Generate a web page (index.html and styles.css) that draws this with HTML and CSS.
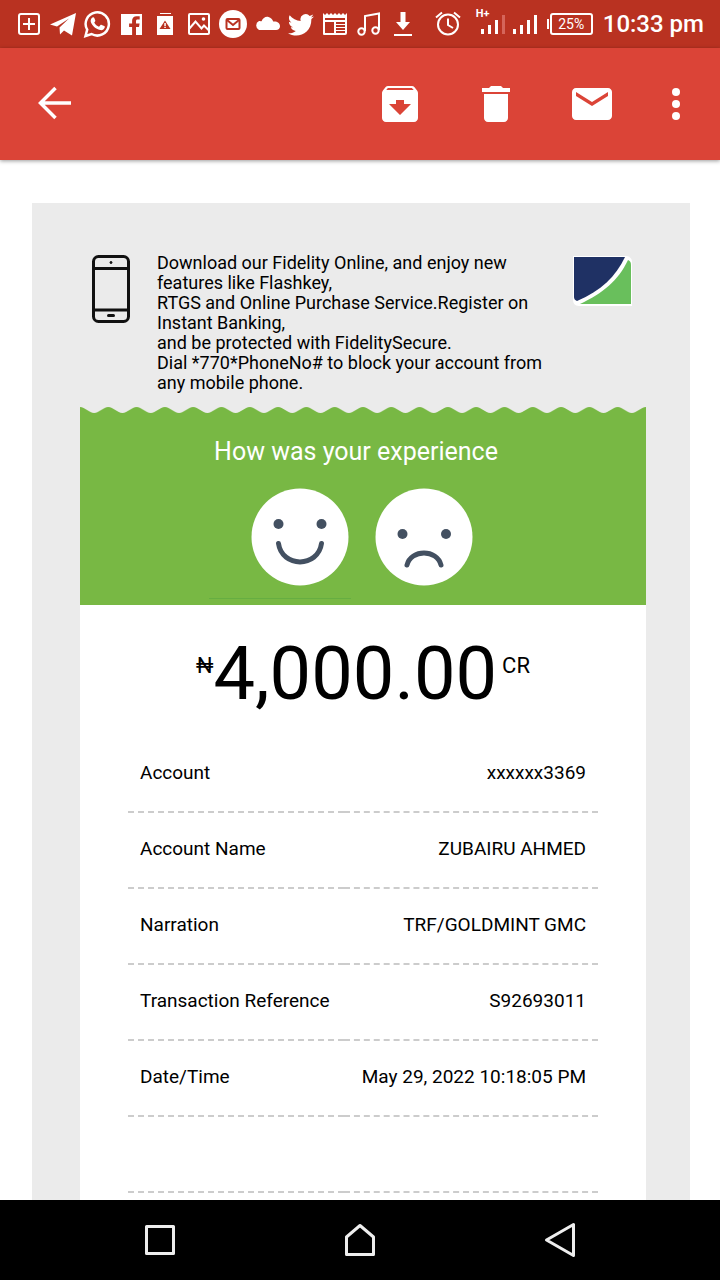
FILE: index.html
```
<!DOCTYPE html>
<html lang="en">
<head>
<meta charset="utf-8">
<meta name="viewport" content="width=device-width, initial-scale=1">
<title>Transaction alert</title>
<link rel="stylesheet" href="styles.css">
</head>
<body>
<div class="screen">
  <div class="status">
    <div class="notifications">
      <svg viewBox="0 0 28 28"><rect x="4" y="4" width="20" height="20" rx="2" class="line"/><path class="line" d="M14 8v12M8 14h12"/></svg>
      <svg viewBox="0 0 28 28"><path d="M1 14.500 27 3l-4 22.500-8-5-4 4-.5-7L20 8.500 8 16.500z"/></svg>
      <svg viewBox="0 0 28 28"><path class="line thick" d="M2.500 26l1.700-6.300A11.600 11.600 0 1 1 8.500 24z"/><path d="M9.500 7.500c.8-.4 1.500-.2 1.800.5l1 2.400c.2.500-.2 1.100-1.100 2 1.200 2.200 2.800 3.500 4.800 4.300l1.500-1.600c.3-.4.7-.4 1.200-.2l2.500 1.200c.7.300.7.800.5 1.500-.6 2-2.500 3-4.600 2.500C12.500 19 9 15.500 7.800 12c-.5-1.700.3-3.600 1.700-4.500z"/></svg>
      <svg viewBox="0 0 28 28"><path d="M4 4h21v21h-6v-8h3l.6-3.500H19v-2.300c0-1 .4-1.700 1.700-1.700h2V6.200h-3c-3 0-4.600 1.800-4.600 4.600v2.700h-3V17h3v8H4z"/></svg>
      <svg viewBox="0 0 28 28"><path d="M9 3h11v1H9zM6 6h16v19H6z"/><path class="cut" d="M14 10.500l5.500 8.500h-11z"/><path d="M13.300 13h1.500v3h-1.500zM13.300 16.800h1.500V18h-1.500z"/></svg>
      <svg viewBox="0 0 28 28"><rect x="4" y="4" width="20" height="20" rx="1" class="line"/><path class="line" d="M4 19l6.500-7.500 6 7 2.500-3 5 5"/><circle cx="18.500" cy="9" r="1.800"/></svg>
      <svg viewBox="0 0 28 28"><circle cx="14" cy="14" r="14"/><rect class="cutline" x="7.500" y="9" width="13" height="10" rx="1"/><path class="cutline" d="M8 10l6 5 6-5"/></svg>
      <svg viewBox="0 0 28 28"><path d="M6 20a5 5 0 0 1 0-9c1-.3 2 0 2.500.3C10 8 12.500 6.200 15.500 7c2.500.6 4 2.300 4.700 4.500C24 11 27 13 27 16.200 27 18.500 25.500 20 23 20z"/></svg>
      <svg viewBox="0 0 28 28"><path d="M27 6.500c-1 .5-2 .7-3 .9 1-.8 1.700-1.600 2.200-2.800-1.200.7-2.300 1.100-3.500 1.300A5.300 5.300 0 0 0 13.700 11C9.300 10.800 5.300 8.700 2.700 5.300c-1.400 2.500-.8 5.500 1.700 7.200-1 0-1.700-.3-2.500-.7.100 2.800 1.700 4.700 4.300 5.400-.8.200-1.600.2-2.400.1.800 2.200 2.600 3.500 5 3.700C6.500 22.800 4 23.500 1 23.200 9.500 28.500 24.400 25 24.400 9c1-.7 1.900-1.600 2.600-2.500z"/></svg>
      <svg viewBox="0 0 28 28"><path fill-rule="evenodd" d="M2 3l2 2 2-2 2 2 2-2 2 2 2-2 2 2 2-2 2 2 2-2 2 2 2-2v20a2 2 0 0 1-2 2H3a1 1 0 0 1-1-1zM4 8v2h20V8zm0 4v11h9V12zm11 0v2h9v-2zm0 3v2h9v-2zm0 3v2h9v-2zm0 3v2h9v-2z"/></svg>
      <svg viewBox="0 0 28 28"><path class="line" d="M10 21V6l14-2.500V20"/><circle class="line" cx="6.500" cy="21.500" r="3.200"/><circle class="line" cx="20.500" cy="20.500" r="3.200"/></svg>
      <svg viewBox="0 0 28 28"><path d="M11.500 2h5v10H21l-7 8-7-8h4.500zM5 24h18v2H5z"/></svg>
    </div>
    <div class="system">
      <svg class="alarm" viewBox="0 0 28 28"><circle class="line" cx="14" cy="14.500" r="10"/><path class="line" d="M14 8.500V15l5 3M2 7.500l6-5M26 7.500l-6-5"/></svg>
      <span class="signals">
        <span class="cell"><span class="network">H+</span><svg class="bars" viewBox="0 0 26 20"><path d="M1 15h3v5H1zM8 11h3v9H8zM15 6h3v14h-3z"/><path class="dim" d="M22 1h3v19h-3z"/></svg></span>
        <svg class="bars" viewBox="0 0 26 20"><path d="M1 15h3v5H1zM8 11h3v9H8zM15 6h3v14h-3zM22 1h3v19h-3z"/></svg>
      </span>
      <span class="battery">25%</span>
      <span class="clock">10:33 pm</span>
    </div>
  </div>

  <header class="appbar">
    <button class="action back" aria-label="Back"><svg viewBox="0 0 48 48"><path class="arrow" d="M24.500 8 9.500 23l15 15M9.500 23H40"/></svg></button>
    <button class="action" aria-label="Archive"><svg viewBox="0 0 24 24"><path d="M20.540 5.230l-1.390-1.680C18.880 3.210 18.470 3 18 3H6c-.47 0-.88.21-1.160.550L3.460 5.230C3.170 5.570 3 6.020 3 6.500V19c0 1.100.9 2 2 2h14c1.100 0 2-.9 2-2V6.500c0-.48-.17-.93-.46-1.270zM12 17.500L6.500 12H10v-2h4v2h3.500L12 17.500zM5.120 5l.81-1h12l.94 1H5.120z"/></svg></button>
    <button class="action" aria-label="Delete"><svg viewBox="0 0 24 24"><path d="M6 19c0 1.100.9 2 2 2h8c1.100 0 2-.9 2-2V7H6v12zM19 4h-3.500l-1-1h-5l-1 1H5v2h14V4z"/></svg></button>
    <button class="action" aria-label="Mark as unread"><svg viewBox="0 0 24 24"><path d="M20 4H4c-1.100 0-1.990.9-1.990 2L2 18c0 1.100.9 2 2 2h16c1.100 0 2-.9 2-2V6c0-1.100-.9-2-2-2zm0 4l-8 5-8-5V6l8 5 8-5v2z"/></svg></button>
    <button class="action more" aria-label="More options"><svg viewBox="0 0 24 24"><circle cx="12" cy="6" r="2"/><circle cx="12" cy="12" r="2"/><circle cx="12" cy="18" r="2"/></svg></button>
  </header>

  <main class="message">
    <article class="mail">
      <div class="promo">
        <svg class="phone" viewBox="0 0 38 68"><rect x="1.500" y="1.500" width="35" height="65" rx="5"/><path d="M2 13.500h34M2 55h34"/><path class="home" d="M16.500 60.500h5"/><circle cx="19" cy="7.500" r="1"/></svg>
        <p class="promo-text">Download our Fidelity Online, and enjoy new features like Flashkey,<br>RTGS and Online Purchase Service.Register on Instant Banking,<br>and be protected with FidelitySecure.<br>Dial *770*PhoneNo# to block your account from any mobile phone.</p>
        <svg class="logo" viewBox="0 0 62 52"><path class="halo" d="M1 1h53c4 0 6 3 6 6v44H7c-4 0-6-3-6-6z"/><path class="navy" d="M2 2h51C44 21 29 36 5 46c-2-1-3-2-3-4z"/><path class="leaf" d="M56 5c2 1 3 2 3 5v39H8C31 38 46 26 56 5z"/></svg>
      </div>

      <section class="survey">
        <svg class="wave" viewBox="0 0 560 6" preserveAspectRatio="none"><defs><pattern id="scallop" width="28" height="6" patternUnits="userSpaceOnUse"><path d="M0 0C5 0 9 6 14 6S23 0 28 0v6H0z"/></pattern></defs><rect width="560" height="6" fill="url(#scallop)"/></svg>
        <h2 class="question">How was your experience</h2>
        <div class="faces">
          <button class="face" aria-label="Good"><svg viewBox="0 0 98 98"><circle class="skin" cx="49" cy="49" r="48.500"/><circle cx="27.500" cy="36" r="5"/><circle cx="70.500" cy="36" r="5"/><path d="M27.500 55.500C31 80 67 80 70.500 55.500"/></svg></button>
          <button class="face" aria-label="Bad"><svg viewBox="0 0 98 98"><circle class="skin" cx="49" cy="49" r="48.500"/><circle cx="27.500" cy="46" r="5"/><circle cx="71" cy="46" r="5"/><path d="M32 77c4-16 30-16 34 0"/></svg></button>
        </div>
        <div class="trace"></div>
      </section>

      <section class="receipt">
        <p class="amount"><span class="unit">₦</span><span class="figure">4,000.00</span><span class="unit credit">CR</span></p>
        <table class="details">
          <tr><th scope="row">Account</th><td>xxxxxx3369</td></tr>
          <tr><th scope="row">Account Name</th><td>ZUBAIRU AHMED</td></tr>
          <tr><th scope="row">Narration</th><td>TRF/GOLDMINT GMC</td></tr>
          <tr><th scope="row">Transaction Reference</th><td>S92693011</td></tr>
          <tr><th scope="row">Date/Time</th><td>May 29, 2022 10:18:05 PM</td></tr>
          <tr><th></th><td></td></tr>
          <tr><th></th><td></td></tr>
        </table>
      </section>
    </article>
  </main>

  <nav class="navbar">
    <button class="key" aria-label="Recent apps"><svg viewBox="0 0 40 40"><path d="M6.500 6.500h27v27h-27z"/></svg></button>
    <button class="key" aria-label="Home"><svg viewBox="0 0 40 40"><path d="M6.500 17 20 5.500 33.500 17v17.500h-27z"/></svg></button>
    <button class="key" aria-label="Back"><svg viewBox="0 0 40 40"><path d="M33.500 4.500v31L6.500 20z"/></svg></button>
  </nav>
</div>
</body>
</html>
```
FILE: styles.css
```
* { box-sizing: border-box; }
body { margin: 0; font-family: Roboto, "Liberation Sans", sans-serif; color: #000; background: #fff; }
button { padding: 0; border: 0; background: none; cursor: pointer; }
svg { display: block; }

.screen { display: flex; flex-direction: column; height: 100vh; }

.status { display: flex; flex: none; justify-content: space-between; align-items: center; height: 48px; padding: 0 16px 0 15px; background: #b93221; color: #fff; }
.notifications { display: flex; gap: 6px; }
.notifications svg, .alarm { width: 28px; height: 28px; fill: #fff; }
.status .line { fill: none; stroke: #fff; stroke-width: 2; }
.status .thick { stroke-width: 2.500; }
.status .cut { fill: #b93221; }
.status .cutline { fill: none; stroke: #b93221; stroke-width: 2; }
.system { display: flex; align-items: center; gap: 12px; }
.signals { display: flex; gap: 6px; margin-left: 6px; }
.cell { position: relative; }
.network { position: absolute; left: -4px; top: -6px; font-size: 11px; line-height: 12px; font-weight: 700; }
.bars { width: 26px; height: 20px; fill: #fff; }
.bars .dim { fill: #d5655a; }
.battery { position: relative; width: 43px; height: 22px; border: 2px solid #fff; border-radius: 3px; font-size: 14px; line-height: 18px; text-align: center; }
.battery::before { content: ""; position: absolute; left: -5px; top: 4px; width: 2px; height: 10px; background: #fff; }
.clock { margin-left: -2px; font-size: 24px; line-height: 28px; font-weight: 500; }

.appbar { position: relative; display: flex; flex: none; align-items: center; gap: 48px; height: 112px; padding: 0 20px 0 31px; background: #db4437; box-shadow: 0 1px 4px rgba(0, 0, 0, .4); }
.action svg { width: 48px; height: 48px; fill: #fff; }
.back { margin-right: auto; }
.more { margin-left: -12px; }
.action .arrow { fill: none; stroke: #fff; stroke-width: 3.500; }

.message { flex: 1; min-height: 0; overflow: hidden; padding: 43px 30px 0 32px; }
.mail { padding: 50px 44px 48px 48px; background: #ebebeb; }
.promo { display: flex; align-items: flex-start; padding: 0 12px 14px; }
.phone { flex: none; width: 38px; height: 68px; margin: 2px 27px 0 0; fill: none; stroke: #111; stroke-width: 3; }
.phone circle { stroke-width: 1; fill: #111; }
.phone .home { stroke-linecap: round; }
.promo-text { flex: 0 1 390px; margin: 0 auto 0 0; font-size: 18px; line-height: 20px; }
.logo { flex: none; width: 62px; height: 52px; margin-top: 2px; }
.halo { fill: #fff; }
.navy { fill: #1f3164; }
.leaf { fill: #69bf5c; }

.survey { height: 198px; background: #78b844; }
.wave { width: 100%; height: 6px; background: #ebebeb; fill: #78b844; }
.question { margin: 0; padding: 24px 14px 21px 0; color: #fff; font-size: 25px; line-height: 30px; font-weight: 400; text-align: center; }
.faces { display: flex; justify-content: center; gap: 26px; padding-right: 2px; }
.face svg { width: 98px; height: 98px; fill: #435061; }
.face .skin { fill: #fff; }
.face path { fill: none; stroke: #435061; stroke-width: 5; stroke-linecap: round; }
.trace { width: 25%; height: 1px; margin: 12px 0 0 129px; background: #66ae42; }

.receipt { padding: 32px 48px; background: #fff; }
.amount { display: flex; justify-content: center; margin: 0 0 26px; line-height: 74px; }
.figure { font-size: 74px; }
.unit { padding-top: 18px; font-size: 22px; line-height: 22px; }
.credit { padding-left: 5px; }
.details { width: 100%; border-spacing: 0; table-layout: fixed; font-size: 19px; line-height: 22px; }
.details th, .details td { height: 76px; padding: 0 12px 2px; border-bottom: 2px dashed #ccc; font-weight: 400; }
.details th { width: 46%; text-align: left; white-space: nowrap; }
.details td { text-align: right; }

.navbar { display: flex; flex: none; justify-content: center; align-items: center; gap: 160px; height: 80px; background: #000; }
.key svg { width: 40px; height: 40px; fill: none; stroke: #eee; stroke-width: 3; stroke-linejoin: round; }
```
